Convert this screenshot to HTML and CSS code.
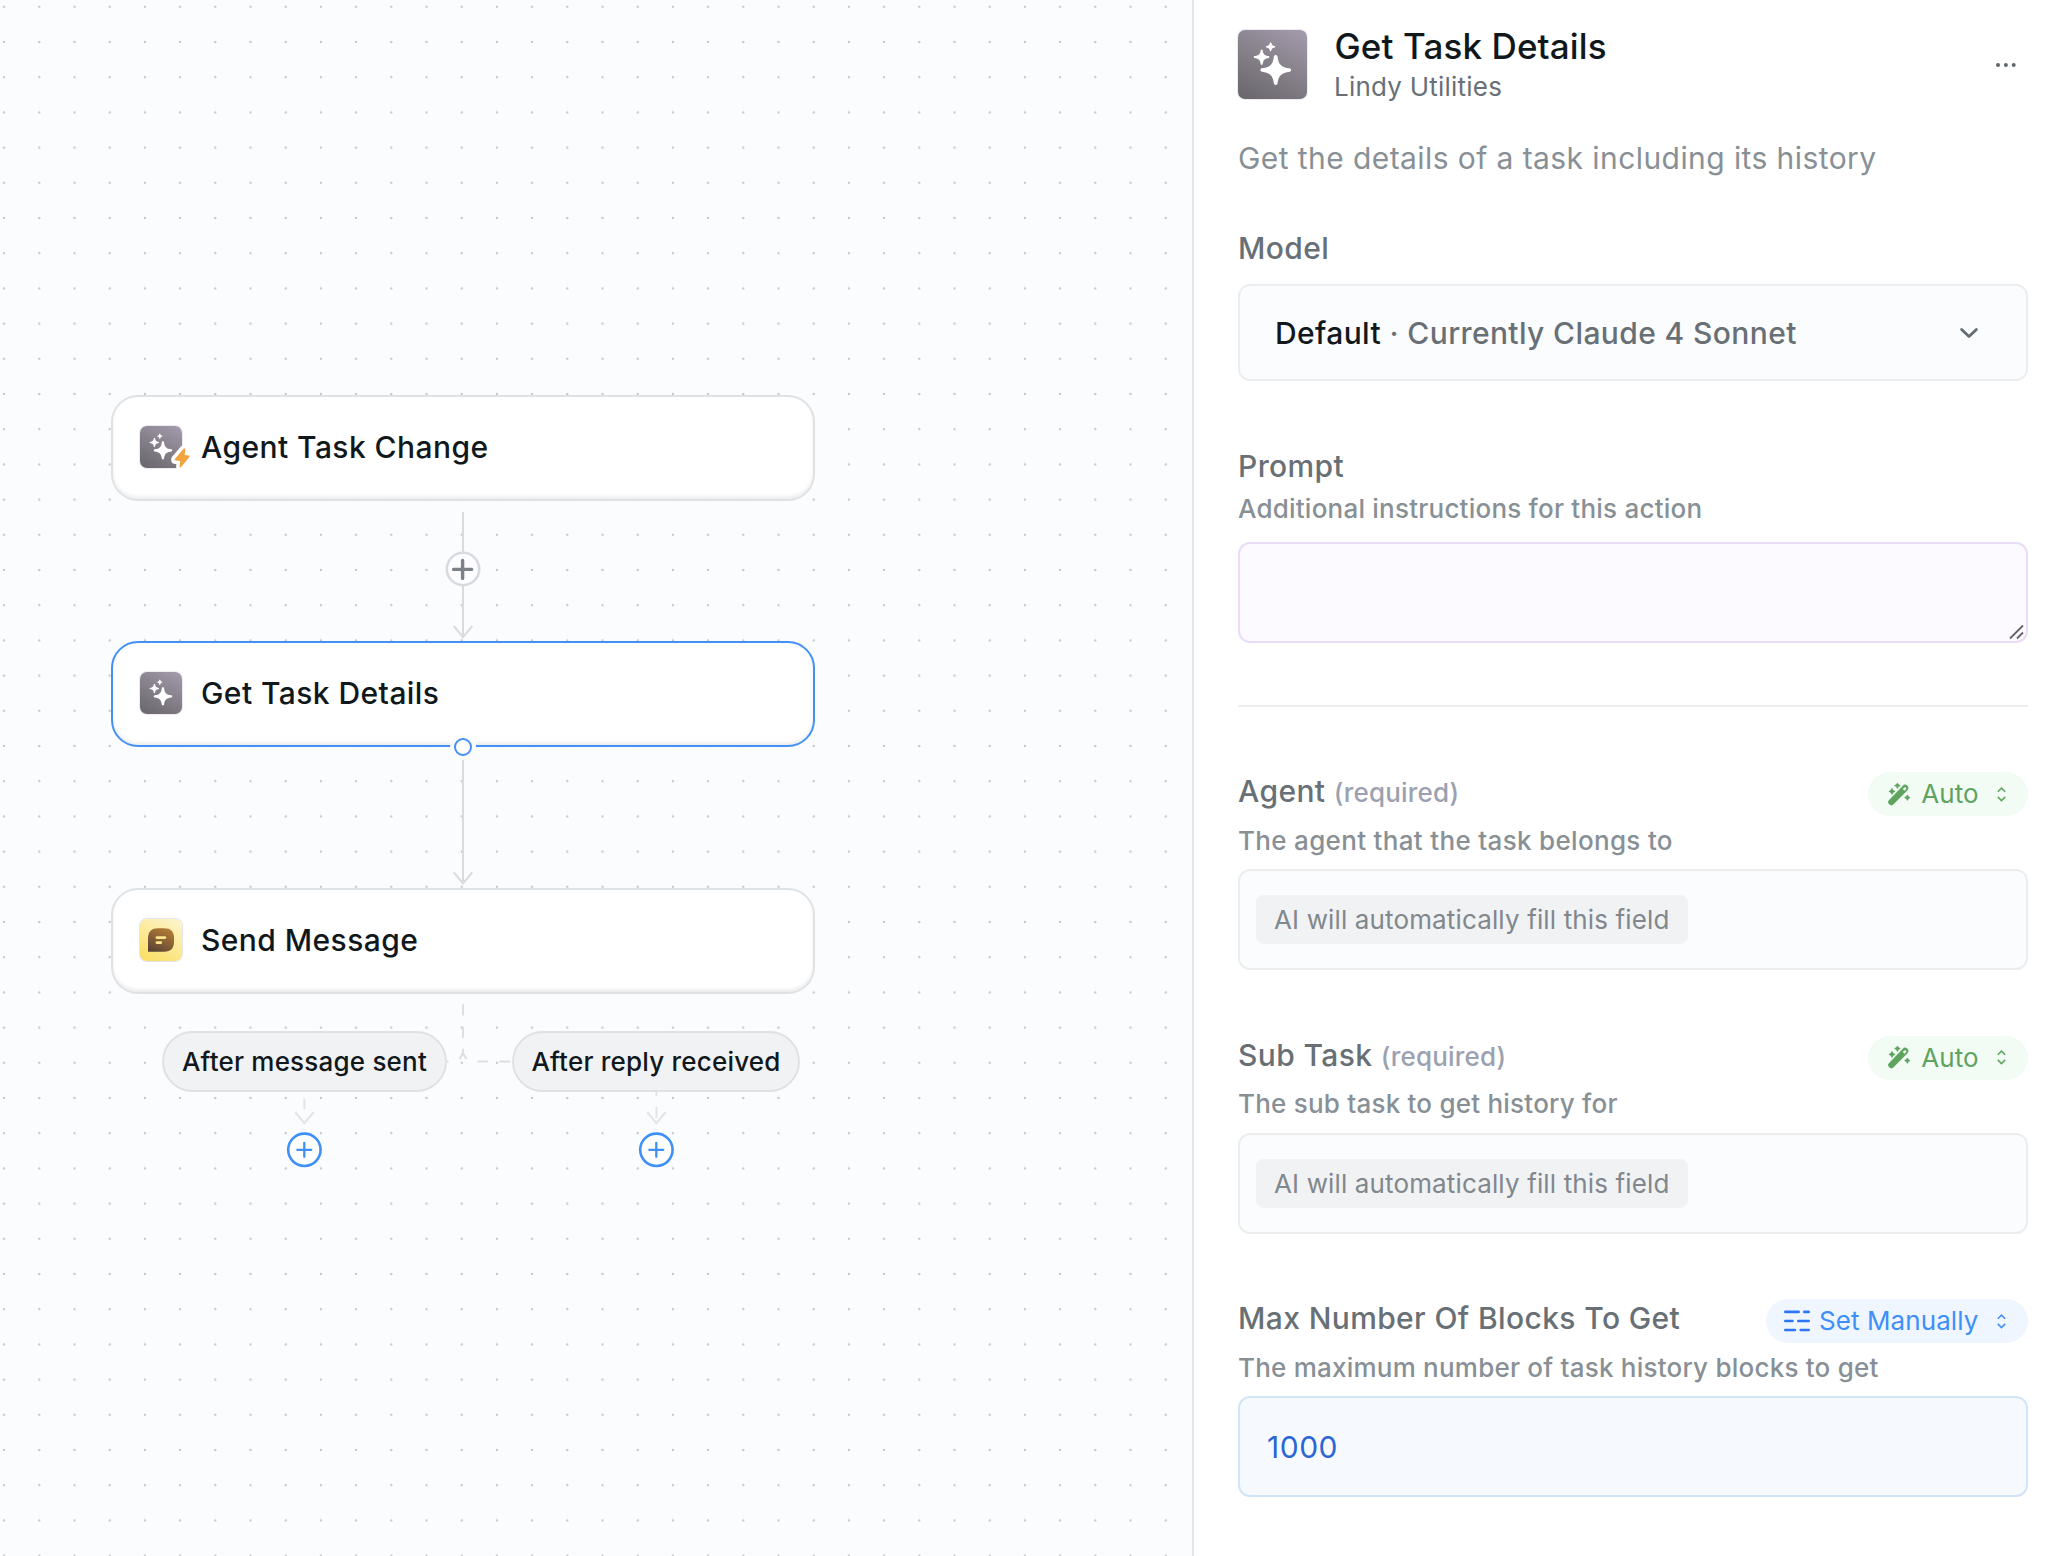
FILE: index.html
```html
<!DOCTYPE html>
<html lang="en">
<head>
<meta charset="utf-8">
<title>Get Task Details</title>
<link rel="stylesheet" href="styles.css">
</head>
<body>
<svg class="defs" width="0" height="0" aria-hidden="true">
  <defs>
    <symbol id="sparkles" viewBox="0 0 69 69">
      <path d="M35.9 26.2Q37.7 23.2 39.5 26.2C40.3 34.5 43.3 37.4 51.8 38.3Q54.6 40 51.8 41.8C43.3 42.8 40.3 45.8 39.5 53.8Q37.7 56.2 35.9 53.8C35 45.8 32.1 42.8 23.8 41.8Q20.8 40 23.8 38.3C32.1 37.4 35 34.5 35.9 26.2Z"/>
      <path d="M22.7 20.2Q23.7 18.6 24.7 20.2C25.1 24.2 26.6 25.6 30.8 26.1Q32.2 27 30.8 27.9C26.6 28.5 25.1 30 24.7 34.2Q23.7 35.6 22.7 34.2C22.3 30 20.8 28.5 16.3 27.9Q14.8 27 16.3 26.1C20.8 25.6 22.3 24.2 22.7 20.2Z"/>
      <path d="M31.9 12.8Q32.6 11.7 33.3 12.8C33.6 14.9 34.4 15.7 36.7 16.1Q37.7 16.8 36.7 17.4C34.4 17.8 33.6 18.7 33.3 20.8Q32.6 21.8 31.9 20.8C31.6 18.7 30.8 17.8 28.5 17.4Q27.5 16.8 28.5 16.1C30.8 15.7 31.6 14.9 31.9 12.8Z"/>
    </symbol>
    <symbol id="wand" viewBox="0 0 22 23">
      <path fill-rule="evenodd" d="M14.6 2.9a3.2 3.2 0 0 1 4.9 4.3L5.6 21.3a3.1 3.1 0 0 1-4.5-4.4ZM17.9 4.6c-.6-.6-1.3-.5-1.9.1l-1.2 1.2 1.8 1.8 1.2-1.2c.6-.6.7-1.3.1-1.9Z"/>
      <path d="M4 5.3 5.1 7.3 7.1 8.4 5.1 9.4 4 11.5 2.9 9.4.9 8.4 2.9 7.3ZM9.4 0l1 1.6 1.9 1-1.9 1-1 1.9-1-1.9-1.8-1 1.8-1ZM19.4 11.9l1 1.7 1.7 1-1.7 1-1 1.8-1.1-1.8-1.7-1 1.7-1Z" stroke="currentColor" stroke-width=".7" stroke-linejoin="round"/>
    </symbol>
    <symbol id="updown" viewBox="0 0 9 15">
      <path d="M.8 4.8 4.5 1.1 8.2 4.8M.8 9.9l3.7 3.7 3.7-3.7" fill="none" stroke="currentColor" stroke-width="1.5"/>
    </symbol>
    <pattern id="dots" x="-13.5" y="-10.8" width="35.2" height="35.2" patternUnits="userSpaceOnUse">
      <circle cx="17.6" cy="17.6" r="1.15" fill="#c3c6cb"/>
    </pattern>
    <linearGradient id="bubble" x1=".7" y1="0" x2=".2" y2="1">
      <stop offset="0" stop-color="#b37c35"/><stop offset="1" stop-color="#5c4336"/>
    </linearGradient>
  </defs>
</svg>
<div class="app">
  <main class="canvas">
    <svg class="edges" width="1192" height="1556" viewBox="0 0 1192 1556">
      <rect width="1192" height="1556" fill="url(#dots)"/>
      <g class="edge">
        <path d="M463 512V636"/><path d="M453.8 626 463 637.2 472.3 626"/>
        <path d="M463 760V883"/><path d="M453.8 872.3 463 883.5 472.3 872.3"/>
      </g>
      <g class="edge edge-soft">
        <path d="M463 1004.3v11.2M463 1026.5v11.2M463 1048.8v5"/>
        <path d="M459.6 1059 463 1053 466.4 1059"/>
        <path d="M447 1061.5h1.5M477.3 1061.5h10.7M499.3 1061.5h11"/>
      </g>
      <g class="edge edge-faint">
        <path d="M304.4 1098.5V1109"/><path d="M295.2 1112 304.4 1123.2 313.7 1112"/>
        <path d="M656.4 1091V1096M656.4 1107V1118"/><path d="M647.2 1112 656.4 1123.2 665.7 1112"/>
      </g>
    </svg>

    <div class="node n1">
      <div class="tile"><svg class="glyph"><use href="#sparkles"/></svg>
        <svg class="bolt" width="24" height="28" viewBox="0 0 24 28"><path d="M13.6 4.7 4.8 15.1Q4 16.5 5.5 16.6L10.2 17 9.6 22.6Q10.1 24.2 11.2 23L19.4 13Q20.1 11.6 18.6 11.4L14.6 10.9 15.4 5.4Q15 3.6 13.6 4.7Z"/></svg>
      </div>
      <span>Agent Task Change</span>
    </div>
    <div class="node n2 selected">
      <div class="tile"><svg class="glyph"><use href="#sparkles"/></svg></div>
      <span>Get Task Details</span>
    </div>
    <div class="node n3">
      <div class="tile tile-yellow"><svg width="44" height="44" viewBox="0 0 44 44"><path d="M9 33.7V20.5C9 13.4 12.6 10.2 19 10.2h6C31.8 10.2 35 13.4 35 20v3.8C35 30.4 31.8 33.7 25 33.7Z" fill="url(#bubble)"/><path d="M17.9 19.6h8M17.9 24.6h4" stroke="#ffe48c" stroke-width="2.7" stroke-linecap="round"/></svg></div>
      <span>Send Message</span>
    </div>

    <svg class="add-step" viewBox="0 0 36 36"><circle cx="18" cy="18" r="16.2"/><path d="M8.6 18.4h18M17.6 9.4v18"/></svg>
    <div class="handle"></div>
    <div class="branch b1">After message sent</div>
    <div class="branch b2">After reply received</div>
    <svg class="add-end e1" viewBox="0 0 36 36"><circle cx="18.4" cy="17.8" r="16.2"/><path d="M11.3 17.8h14M18.3 10.8v14"/></svg>
    <svg class="add-end e2" viewBox="0 0 36 36"><circle cx="18.4" cy="17.8" r="16.2"/><path d="M11.3 17.8h14M18.3 10.8v14"/></svg>
  </main>

  <aside class="panel">
    <header class="head">
      <div class="tile tile-lg"><svg class="glyph"><use href="#sparkles"/></svg></div>
      <div class="titles"><h1>Get Task Details</h1><p>Lindy Utilities</p></div>
      <svg class="more" width="20" height="6" viewBox="0 0 20 6"><circle cx="2" cy="3" r="2"/><circle cx="9.9" cy="3" r="2"/><circle cx="17.7" cy="3" r="2"/></svg>
    </header>
    <p class="intro">Get the details of a task including its history</p>

    <label class="label">Model</label>
    <div class="select"><span><b>Default</b> · Currently Claude 4 Sonnet</span>
      <svg width="20" height="12" viewBox="0 0 20 12"><path d="M2.6 2.4 10 9.5 17.4 2.4"/></svg>
    </div>

    <label class="label prompt-label">Prompt</label>
    <p class="help prompt-help">Additional instructions for this action</p>
    <div class="prompt"><svg width="16" height="16" viewBox="0 0 16 16"><path d="M1 14.5 14 1.5M8 14.5 14 8.5"/></svg></div>
    <hr>

    <section class="field">
      <div class="row"><label class="label">Agent <small>(required)</small></label>
        <div class="pill auto"><svg width="22" height="23"><use href="#wand"/></svg><span>Auto</span><svg class="ud" width="9" height="15"><use href="#updown"/></svg></div></div>
      <p class="help">The agent that the task belongs to</p>
      <div class="box"><span class="chip">AI will automatically fill this field</span></div>
    </section>
    <section class="field">
      <div class="row"><label class="label">Sub Task <small>(required)</small></label>
        <div class="pill auto"><svg width="22" height="23"><use href="#wand"/></svg><span>Auto</span><svg class="ud" width="9" height="15"><use href="#updown"/></svg></div></div>
      <p class="help">The sub task to get history for</p>
      <div class="box"><span class="chip">AI will automatically fill this field</span></div>
    </section>
    <section class="field">
      <div class="row"><label class="label">Max Number Of Blocks To Get</label>
        <div class="pill manual"><svg width="26" height="22" viewBox="0 0 26 22"><path d="M1.3 1.9h13.4M20.3 1.9h4.4M1.3 11h7.2M14.3 11h10.4M1.3 20h9.6M16.7 20h8"/></svg><span>Set Manually</span><svg class="ud" width="9" height="15"><use href="#updown"/></svg></div></div>
      <p class="help">The maximum number of task history blocks to get</p>
      <div class="box number">1000</div>
    </section>
  </aside>
</div>
</body>
</html>
```
FILE: styles.css
```css
* { box-sizing: border-box; margin: 0; padding: 0; }
body { font-family: Inter, "Liberation Sans", sans-serif; background: #fff; color: #11181c; }
svg { display: block; flex: none; }
.defs { position: absolute; }
.app { display: flex; width: 2060px; height: 1556px; overflow: hidden; }

/* flow canvas */
.canvas { position: relative; width: 1192px; flex: none; background: #fbfcfe; }
.edges { position: absolute; inset: 0; }
.edge { fill: none; stroke: #d9dbdf; stroke-width: 2; stroke-linecap: butt; }
.edge-soft { stroke: #dddfe2; }
.edge-faint { stroke: #e2e4e7; }
.node {
  position: absolute; left: 111px; width: 704px; height: 106px;
  display: flex; align-items: center; gap: 19px; padding: 0 27px 2px;
  border: 2px solid #dfe2e5; border-radius: 27px; background: #fff;
  box-shadow: inset 0 -3px 4px -1px rgba(0,0,0,.09);
  font-size: 30px; line-height: 36px; font-weight: 500; letter-spacing: .43px;
}
.n1 { top: 395px; }
.n2 { top: 641px; }
.n3 { top: 888px; }
.selected { border-color: #4290f8; }
.tile {
  position: relative; flex: none; width: 43px; height: 43px; border-radius: 7px;
  background: linear-gradient(28deg, #69656b, #858089 50%, #a59bae);
  box-shadow: 0 0 0 1px rgba(210,205,220,.4); color: #fff;
}
.tile .glyph { width: 100%; height: 100%; fill: #fff; }
.node span { margin-top: -1px; }
.node .tile { width: 42px; height: 42px; }
.bolt { position: absolute; left: 30px; top: 18px; overflow: visible; fill: #f3a33f; stroke: #fff; stroke-width: 7; stroke-linejoin: round; paint-order: stroke; }
.tile-yellow { background: linear-gradient(28deg, #fadd5f, #fceb9c 55%, #fdf5d0); box-shadow: 0 0 0 1px #e1e5ea; }
.tile-yellow svg { margin: -1px; }
.add-step { position: absolute; left: 445px; top: 551px; width: 36px; height: 36px; fill: #fdfdff; stroke: #d8dadf; stroke-width: 2.6; }
.add-step path { stroke: #7b8187; stroke-width: 3.4; stroke-linecap: round; }
.handle {
  position: absolute; left: 453.5px; top: 738.3px; width: 18px; height: 18px; border-radius: 50%;
  border: 2px solid #4290f8; background: #fff; box-shadow: 0 0 0 4px #fbfcfe;
}
.branch {
  position: absolute; top: 1031px; height: 61px; display: flex; align-items: center; justify-content: center;
  border: 2px solid #dfe1e3; border-radius: 31px; background: #f1f2f4;
  font-size: 26px; font-weight: 500; letter-spacing: .2px;
}
.b1 { left: 162px; width: 285px; }
.b2 { left: 512px; width: 288px; }
.add-end { position: absolute; top: 1132px; width: 36px; height: 36px; fill: #fff; stroke: #3f8ff8; stroke-width: 2.6; }
.add-end path { stroke-width: 2.3; stroke-linecap: round; }
.e1 { left: 286px; }
.e2 { left: 638px; }

/* settings panel */
.panel { flex: 1; border-left: 2px solid #e4e7ea; padding: 30px 32px 0 44px; }
.head { display: flex; align-items: center; gap: 27px; height: 69px; }
.tile-lg { width: 69px; height: 69px; border-radius: 7px; }
.titles { flex: 1; margin-top: -2px; }
h1 { font-size: 35px; line-height: 42px; font-weight: 500; letter-spacing: .13px; margin-left: .5px; }
.titles p { font-size: 26px; line-height: 32px; letter-spacing: .23px; color: #687076; margin-top: 4px; margin-bottom: -1px; }
.more { margin-right: 12px; fill: #60666c; }
.intro { margin-top: 41px; font-size: 30px; line-height: 36px; letter-spacing: .42px; color: #889096; }
.label { display: block; font-size: 30px; line-height: 36px; font-weight: 500; letter-spacing: .38px; color: #687076; }
.label small { font-size: 26px; letter-spacing: .2px; color: #9ba1b0; }
.intro + .label { margin-top: 54px; }
.select {
  margin-top: 18px; height: 97px; display: flex; align-items: center; justify-content: space-between;
  padding: 0 47px 0 35px; border: 2px solid #ebedef; border-radius: 12px; background: #fbfcfe;
  font-size: 30px; font-weight: 500; letter-spacing: .38px; color: #687076;
}
.select b { font-weight: 500; color: #11181c; }
.select svg { fill: none; stroke: #646b71; stroke-width: 2.8; stroke-linecap: round; stroke-linejoin: round; }
.prompt-label { margin-top: 67px; }
.help { font-size: 26px; line-height: 32px; font-weight: 500; letter-spacing: .22px; color: #889096; }
.prompt-help { margin-top: 9px; }
.prompt {
  margin-top: 17px; height: 101px; display: flex; align-items: flex-end; justify-content: flex-end; padding: 1px;
  border: 2px solid #eadcf8; border-radius: 12px; background: #fcfaff;
}
.prompt svg { fill: none; stroke: #63636a; stroke-width: 1.8; }
hr { margin-top: 62px; border: 0; height: 2px; background: #ebedee; }
.field { margin-top: 65.5px; }
hr + .field { margin-top: 65px; }
.row { display: flex; justify-content: space-between; align-items: flex-start; height: 44px; }
.row .label { margin-top: 1px; }
.pill { display: flex; align-items: center; height: 44px; padding-right: 22px; border-radius: 22px; font-size: 26px; line-height: 32px; }
.auto { padding-left: 20px; background: #f2fcf5; color: #5ea45f; }
.auto svg { fill: currentColor; }
.auto span { margin-left: 11px; }
.pill .ud { margin-left: 18.5px; }
.manual { padding-left: 17.5px; background: #eff6ff; color: #3f8ff8; letter-spacing: .1px; }
.manual path { fill: none; stroke: #2f76f6; stroke-width: 2.6; stroke-linecap: round; }
.manual span { margin-left: 9px; }
.field .help { margin-top: 8.5px; }
hr + .field .help { letter-spacing: .32px; }
.box { margin-top: 12.5px; height: 101px; display: flex; align-items: center; padding: 0 16px; border: 2px solid #ebedef; border-radius: 12px; background: #fbfcfe; }
.chip { height: 49px; padding: 0 18px; border-radius: 8px; background: #f1f2f4; font-size: 26px; line-height: 49px; letter-spacing: .14px; color: #80878d; }
.number { border-color: #d0e5fa; background: #f6f9fe; color: #2b66d4; font-size: 30px; letter-spacing: .5px; padding-left: 27px; }
```
